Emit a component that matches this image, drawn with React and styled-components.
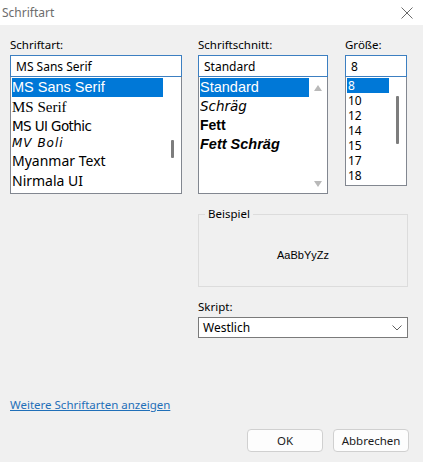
import React from 'react';
import styled, { createGlobalStyle } from 'styled-components';

const GlobalStyle = createGlobalStyle`
  html, body {
    margin: 0;
    padding: 0;
    background: #f0f0f0;
  }
`;

const Dialog = styled.div`
  width: 423px;
  height: 462px;
  background: #f0f0f0;
  font-family: 'Noto Sans', 'Liberation Sans', sans-serif;
  font-size: 11.5px;
  color: #000;
  display: flex;
  flex-direction: column;
  overflow: hidden;
`;

const TitleBar = styled.div`
  height: 25px;
  background: #ffffff;
  display: flex;
  align-items: center;
  justify-content: space-between;
  padding: 0 9px 0 2px;
  color: #6d6d6d;
  font-size: 12px;
`;

const CloseButton = styled.div`
  width: 14px;
  height: 14px;
  display: flex;
`;

const Body = styled.div`
  flex: 1;
  display: flex;
  flex-direction: column;
  padding: 12px 15px 10px 10px;
`;

const Columns = styled.div`
  display: grid;
  grid-template-columns: 172px 130px 63px;
  column-gap: 16px;
  align-items: start;
`;

const Column = styled.div`
  display: flex;
  flex-direction: column;
  margin-left: ${(p) => p.$shift || 0}px;
`;

const Label = styled.div`
  height: 16px;
  line-height: 16px;
  margin-bottom: 2px;
  color: #000;
`;

const TextBox = styled.div`
  height: 22px;
  box-sizing: border-box;
  border: 1px solid #3c7fc1;
  background: #fff;
  padding: 0 5px;
  display: flex;
  align-items: center;
  font-size: 12px;
`;

const ListBox = styled.div`
  height: ${(p) => p.$height}px;
  box-sizing: border-box;
  border: 1px solid #828790;
  border-top: none;
  background: #fff;
  padding: 1px;
  display: flex;
  position: relative;
  overflow: hidden;
`;

const Items = styled.div`
  display: flex;
  flex-direction: column;
  width: ${(p) => p.$width}px;
`;

const Item = styled.div`
  height: ${(p) => p.$h}px;
  line-height: ${(p) => p.$h}px;
  padding-left: ${(p) => (p.$pad ?? 0)}px;
  white-space: nowrap;
  font-family: ${(p) => p.$font || "'Liberation Sans', sans-serif"};
  font-size: ${(p) => p.$size || 14}px;
  font-style: ${(p) => (p.$italic ? 'italic' : 'normal')};
  font-weight: ${(p) => (p.$bold ? 700 : 400)};
  background: ${(p) => (p.$selected ? '#0078d7' : 'transparent')};
  color: ${(p) => (p.$selected ? '#fff' : '#000')};
  letter-spacing: ${(p) => p.$spacing || 0}px;
  overflow: hidden;
`;

const ScrollTrack = styled.div`
  flex: 1;
  position: relative;
`;

const Thumb = styled.div`
  position: absolute;
  left: ${(p) => p.$left}px;
  top: ${(p) => p.$top}px;
  width: 3px;
  height: ${(p) => p.$height}px;
  background: #7d7d7d;
  border-radius: 1px;
`;

const Arrow = styled.div`
  position: absolute;
  left: 5px;
  width: 0;
  height: 0;
  border-left: 4px solid transparent;
  border-right: 4px solid transparent;
  ${(p) =>
    p.$down
      ? 'bottom: 5px; border-top: 6px solid #b9b9b9;'
      : 'top: 7px; border-bottom: 6px solid #b9b9b9;'}
`;

const Lower = styled.div`
  display: grid;
  grid-template-columns: 172px 210px;
  column-gap: 16px;
  margin-top: 13px;
`;

const Group = styled.fieldset`
  grid-column: 2;
  margin: 0;
  height: 80px;
  box-sizing: border-box;
  border: 1px solid #dcdcdc;
  padding: 0;
  display: flex;
  align-items: center;
  justify-content: center;
`;

const Legend = styled.legend`
  margin-left: 6px;
  padding: 0 3px;
  font-size: 11.5px;
  line-height: 14px;
`;

const Sample = styled.div`
  font-family: 'Liberation Sans', sans-serif;
  font-size: 11px;
  margin-top: 2px;
`;

const ScriptBlock = styled.div`
  grid-column: 2;
  display: flex;
  flex-direction: column;
  margin-top: 12px;
`;

const Select = styled.div`
  height: 21px;
  box-sizing: border-box;
  border: 1px solid #7a7a7a;
  background: #fff;
  display: flex;
  align-items: center;
  justify-content: space-between;
  padding: 0 5px 0 4px;
  font-size: 12px;
`;

const Spacer = styled.div`
  flex: 1;
`;

const Link = styled.a`
  color: #1f6fb8;
  text-decoration: underline;
  font-size: 11.5px;
  line-height: 16px;
  align-self: flex-start;
  cursor: pointer;
`;

const Footer = styled.div`
  display: flex;
  justify-content: flex-end;
  gap: 10px;
  margin-top: 16px;
  margin-right: -1px;
`;

const Button = styled.button`
  width: 76px;
  height: 23px;
  box-sizing: border-box;
  border: 1px solid #d0d0d0;
  border-radius: 4px;
  background: #fdfdfd;
  font-family: 'Noto Sans', 'Liberation Sans', sans-serif;
  font-size: 11.5px;
  color: #1b1b1b;
  padding: 0;
`;

const fonts = [
  { name: 'MS Sans Serif', h: 19, font: "'Liberation Sans', sans-serif", size: 14.5, selected: true },
  { name: 'MS Serif', h: 20, font: "'Liberation Serif', serif", size: 15 },
  { name: 'MS UI Gothic', h: 19, font: "'DejaVu Sans', sans-serif", size: 13.5, spacing: -0.6 },
  { name: 'MV Boli', h: 16, font: "'DejaVu Sans', sans-serif", size: 12, italic: true, spacing: 1 },
  { name: 'Myanmar Text', h: 19, font: "'Noto Sans', sans-serif", size: 14 },
  { name: 'Nirmala UI', h: 22, font: "'Noto Sans', sans-serif", size: 14 },
];

const styles = [
  { name: 'Standard', selected: true, size: 14.5 },
  { name: 'Schräg', italic: true, size: 13.5, font: "'DejaVu Sans', sans-serif" },
  { name: 'Fett', bold: true, size: 14 },
  { name: 'Fett Schräg', bold: true, italic: true, size: 14.5 },
];

const sizes = ['8', '10', '12', '14', '15', '17', '18'];

export default function App() {
  return (
    <>
      <GlobalStyle />
      <Dialog>
        <TitleBar>
          <span>Schriftart</span>
          <CloseButton>
            <svg width="14" height="14" viewBox="0 0 14 14">
              <path d="M1.5 1.5 L12.5 12.5 M12.5 1.5 L1.5 12.5" stroke="#6a6a6a" strokeWidth="1" fill="none" />
            </svg>
          </CloseButton>
        </TitleBar>
        <Body>
          <Columns>
            <Column>
              <Label>Schriftart:</Label>
              <TextBox>MS Sans Serif</TextBox>
              <ListBox $height={117}>
                <Items $width={151}>
                  {fonts.map((f) => (
                    <Item
                      key={f.name}
                      $h={f.h}
                      $font={f.font}
                      $size={f.size}
                      $italic={f.italic}
                      $selected={f.selected}
                      $spacing={f.spacing}
                    >
                      {f.name}
                    </Item>
                  ))}
                </Items>
                <ScrollTrack>
                  <Thumb $left={8} $top={62} $height={18} />
                </ScrollTrack>
              </ListBox>
            </Column>
            <Column>
              <Label>Schriftschnitt:</Label>
              <TextBox>Standard</TextBox>
              <ListBox $height={117}>
                <Items $width={109}>
                  {styles.map((s) => (
                    <Item
                      key={s.name}
                      $h={19}
                      $size={s.size}
                      $font={s.font}
                      $italic={s.italic}
                      $bold={s.bold}
                      $selected={s.selected}
                    >
                      {s.name}
                    </Item>
                  ))}
                </Items>
                <ScrollTrack>
                  <Arrow />
                  <Arrow $down />
                </ScrollTrack>
              </ListBox>
            </Column>
            <Column $shift={1}>
              <Label>Größe:</Label>
              <TextBox>8</TextBox>
              <ListBox $height={109}>
                <Items $width={42}>
                  {sizes.map((s, i) => (
                    <Item key={s} $h={15} $size={12} $pad={1} $selected={i === 0} $font="'Noto Sans', sans-serif">
                      {s}
                    </Item>
                  ))}
                </Items>
                <ScrollTrack>
                  <Thumb $left={7} $top={18} $height={48} />
                </ScrollTrack>
              </ListBox>
            </Column>
          </Columns>
          <Lower>
            <Group>
              <Legend>Beispiel</Legend>
              <Sample>AaBbYyZz</Sample>
            </Group>
            <ScriptBlock>
              <Label>Skript:</Label>
              <Select>
                <span>Westlich</span>
                <svg width="10" height="6" viewBox="0 0 10 6">
                  <path d="M0.5 0.5 L5 5 L9.5 0.5" stroke="#606060" strokeWidth="1" fill="none" />
                </svg>
              </Select>
            </ScriptBlock>
          </Lower>
          <Spacer />
          <Link>Weitere Schriftarten anzeigen</Link>
          <Footer>
            <Button>OK</Button>
            <Button>Abbrechen</Button>
          </Footer>
        </Body>
      </Dialog>
    </>
  );
}
